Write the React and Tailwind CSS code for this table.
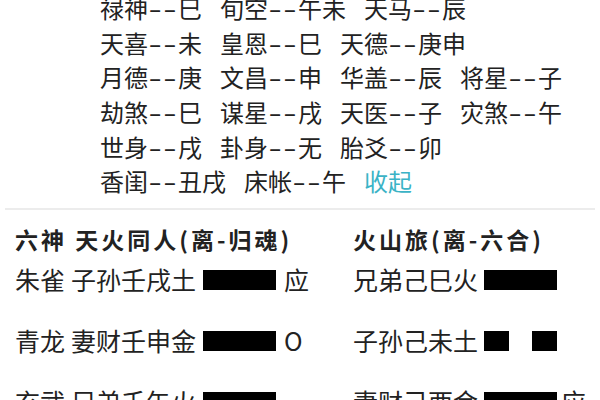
const top = [
  ["禄神--巳", "旬空--午未", "天马--辰"],
  ["天喜--未", "皇恩--巳", "天德--庚申"],
  ["月德--庚", "文昌--申", "华盖--辰", "将星--子"],
  ["劫煞--巳", "谋星--戌", "天医--子", "灾煞--午"],
  ["世身--戌", "卦身--无", "胎爻--卯"],
  ["香闺--丑戌", "床帐--午"],
];

const rows = [
  { god: "朱雀", left: "子孙壬戌土", lYang: true, lMark: "应", right: "兄弟己巳火", rYang: true, rMark: "" },
  { god: "青龙", left: "妻财壬申金", lYang: true, lMark: "O", right: "子孙己未土", rYang: false, rMark: "" },
  { god: "玄武", left: "兄弟壬午火", lYang: true, lMark: "", right: "妻财己酉金", rYang: true, rMark: "应" },
];

const Bar = ({ yang }) =>
  yang ? (
    <span className="inline-block w-[73px] h-[20px] bg-black" />
  ) : (
    <span className="inline-flex w-[73px] h-[20px] justify-between">
      <span className="w-[25px] h-full bg-black" />
      <span className="w-[25px] h-full bg-black" />
    </span>
  );

const App = () => {
  return (
    <div
      className="w-[600px] h-[400px] overflow-hidden bg-white text-[#222]"
      style={{ fontFamily: '"Noto Sans CJK SC", "Noto Sans", sans-serif' }}
    >
      <div className="pl-[100px] mt-[-9px] text-[24px]">
        {top.map((r, i) => (
          <div key={i} className="h-[34.7px] leading-[34.7px] flex gap-[18px] whitespace-nowrap">
            {r.map((t) => (
              <span key={t} className="flex">
                <span>{t.split("--")[0]}</span>
                <span className="w-[30px] text-center">
                  <span className="inline-block scale-x-[1.6] tracking-[1px]">--</span>
                </span>
                <span>{t.split("--")[1]}</span>
              </span>
            ))}
            {i === 5 && <span className="text-[#3bb3c6]">收起</span>}
          </div>
        ))}
      </div>
      <div className="mt-[9px] mx-[5px] h-[2px] bg-[#ececec]" />
      <div className="flex pl-[15px] mt-[17px] text-[23px] tracking-[3px] font-bold leading-[24px] whitespace-nowrap">
        <div className="w-[338px]">六神 天火同人(离-归魂)</div>
        <div>火山旅(离-六合)</div>
      </div>
      <div className="pl-[15px] mt-[-2px] text-[25px]">
        {rows.map((r) => (
          <div key={r.god} className="flex items-center h-[61px] whitespace-nowrap">
            <div className="w-[338px] flex items-center">
              <span>{r.god}</span>
              <span className="ml-[6px]">{r.left}</span>
              <span className="ml-[7px] flex"><Bar yang={r.lYang} /></span>
              <span className="ml-[8px]">{r.lMark}</span>
            </div>
            <div className="flex items-center">
              <span>{r.right}</span>
              <span className="ml-[6px] flex"><Bar yang={r.rYang} /></span>
              <span className="ml-[4px]">{r.rMark}</span>
            </div>
          </div>
        ))}
      </div>
    </div>
  );
};

export default App;
